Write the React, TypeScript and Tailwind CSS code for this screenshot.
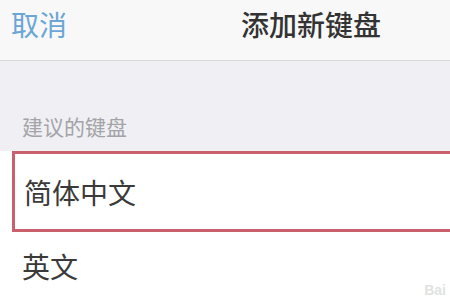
const font = { fontFamily: '"Noto Sans CJK SC", "Noto Sans", sans-serif' };

export default function App() {
  return (
    <div className="w-[450px] h-[300px] overflow-hidden bg-white" style={font}>
      {/* nav bar */}
      <div className="h-[61px] bg-[#f8f8f8] border-b border-[#d9d9d9] flex items-start pt-[6px]">
        <button className="pl-[11px] text-[28px] leading-[36px] text-[#6aa6d6]">取消</button>
        <h1 className="ml-[174px] text-[28px] leading-[36px] font-medium text-[#333333]">添加新键盘</h1>
      </div>

      {/* section header */}
      <div className="h-[90px] bg-[#f0f0f4] flex items-end pb-[10px] pl-[22px]">
        <span className="text-[21px] leading-[30px] text-[#a3a3a8]">建议的键盘</span>
      </div>

      {/* rows */}
      <div className="bg-white">
        <div className="ml-[12px] w-[460px] h-[81px] border-[3px] border-[#c9606b] flex items-center pl-[9px]">
          <span className="text-[28px] leading-[36px] text-[#3a3a3a]">简体中文</span>
        </div>
        <div className="h-[68px] flex items-center pl-[22px] relative">
          <span className="text-[28px] leading-[36px] text-[#3a3a3a]">英文</span>
          <span className="absolute right-[4px] bottom-[2px] text-[14px] leading-[16px] font-bold text-[#e2e2e2]" style={{ fontFamily: '"Liberation Sans", sans-serif' }}>Bai</span>
        </div>
      </div>
    </div>
  );
}
